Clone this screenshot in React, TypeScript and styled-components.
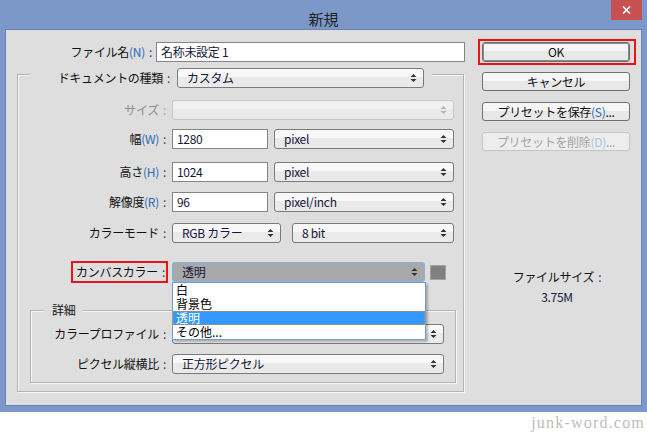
import styled, { createGlobalStyle } from "styled-components"

const GlobalStyle = createGlobalStyle`
  html, body { margin: 0; padding: 0; background: #fff; }
  body { font-family: "Noto Sans CJK JP", "Noto Sans", sans-serif; }
`

const Page = styled.div`
    width: 647px;
    height: 433px;
    background: #fff;
    overflow: hidden;
`
const Window = styled.div`
    height: 412px;
    box-sizing: border-box;
    background: #7c98c9;
    padding: 0 5px 6px;
    display: flex;
    flex-direction: column;
`
const TitleBar = styled.div`
    height: 29px;
    flex-shrink: 0;
    display: grid;
    grid-template-columns: 1fr auto 1fr;
    align-items: start;
`
const Title = styled.div`
    grid-column: 2;
    padding-top: 10px;
    font-size: 15px;
    line-height: 18px;
    color: #222;
`
const CloseButton = styled.div`
    grid-column: 3;
    justify-self: end;
    width: 31px;
    height: 20px;
    background: #c75050;
    display: flex;
    align-items: center;
    justify-content: center;
`
const Body = styled.div`
    flex: 1;
    background: #dedede;
    border: 1px solid #6a83b2;
    display: flex;
    font-size: 12px;
    letter-spacing: -0.3px;
    color: #111;
`
const FormColumn = styled.div`
    width: 472px;
    padding-top: 12px;
    display: flex;
    flex-direction: column;
`
const SideColumn = styled.div`
    width: 158px;
    padding-top: 9px;
    display: flex;
    flex-direction: column;
    align-items: flex-start;
`
const Row = styled.div<{ $mt?: number }>`
    display: flex;
    align-items: center;
    height: 20px;
    margin-top: ${p => p.$mt ?? 0}px;
`
const Label = styled.div<{ $w: number; $pr?: number; $muted?: boolean }>`
    width: ${p => p.$w}px;
    flex-shrink: 0;
    box-sizing: border-box;
    padding-right: ${p => p.$pr ?? 6}px;
    text-align: right;
    white-space: nowrap;
    line-height: 20px;
    color: ${p => (p.$muted ? "#8c8c8c" : "#111")};
`
const Framed = styled.span`
    display: inline-block;
    border: 2px solid #e8141a;
    padding: 0 1px 0 3px;
    line-height: 18px;
    margin: -1px 0;
`
const Accel = styled.span<{ $off?: boolean }>`
    color: ${p => (p.$off ? "#a9c4e4" : "#2b68b4")};
`
const Colon = styled.span<{ $muted?: boolean }>`
    color: ${p => (p.$muted ? "#a5a5a5" : "#3b3568")};
    margin-left: 4px;
`
const TextBox = styled.div<{ $w: number }>`
    width: ${p => p.$w}px;
    height: 20px;
    box-sizing: border-box;
    border: 1px solid #858585;
    background: #fff;
    padding-left: 4px;
    line-height: 18px;
    color: #16163a;
    flex-shrink: 0;
`
const SelectBox = styled.div<{ $w: number; $variant: "normal" | "disabled" | "open"; $ml?: number }>`
    position: relative;
    width: ${p => p.$w}px;
    height: 20px;
    margin-left: ${p => p.$ml ?? 0}px;
    box-sizing: border-box;
    flex-shrink: 0;
    display: flex;
    align-items: center;
    justify-content: space-between;
    padding: 0 6px 0 9px;
    border-radius: 3px;
    line-height: 18px;
    color: #16163a;
    border: 1px solid ${p => (p.$variant === "disabled" ? "#c6c6c6" : p.$variant === "open" ? "#7fb2e6" : "#7a7a7a")};
    background: ${p =>
        p.$variant === "open"
            ? "#a9a9a9"
            : p.$variant === "disabled"
            ? "linear-gradient(#f1f1f1 0 45%, #e9e9e9 45%)"
            : "linear-gradient(#f8f8f8 0 45%, #eaeaea 45%)"};
`
const Swatch = styled.div`
    width: 16px;
    height: 15px;
    margin-left: 5px;
    box-sizing: border-box;
    background: #808080;
    border: 1px solid #a0a0a0;
`
const Group = styled.div<{ $m: string; $w?: number }>`
    margin: ${p => p.$m};
    ${p => (p.$w ? `width: ${p.$w}px;` : "")}
    box-sizing: border-box;
    border: 1px solid #b3b3b3;
    box-shadow: inset 1px 1px 0 #f6f6f6, 1px 1px 0 #f6f6f6;
    padding-bottom: 8px;
    display: flex;
    flex-direction: column;
`
const GroupHeader = styled.div`
    display: flex;
    align-items: center;
    width: 402px;
    box-sizing: border-box;
    margin: -7px 0 0 12px;
    padding-right: 8px;
    background: #dedede;
`
const SubHeader = styled.div`
    align-self: flex-start;
    margin: -9px 0 0 13px;
    padding: 0 8px;
    line-height: 16px;
    background: #dedede;
`
const ListAnchor = styled.div`
    position: relative;
`
const DropList = styled.div`
    position: absolute;
    top: 20px;
    left: 0;
    width: 254px;
    box-sizing: border-box;
    border: 1px solid #6c9fd6;
    background: #fff;
    box-shadow: 2px 2px 2px rgba(0, 0, 0, 0.25);
    z-index: 2;
`
const DropItem = styled.div<{ $active?: boolean }>`
    height: 14px;
    line-height: 14px;
    padding-left: 3px;
    font-size: 12px;
    letter-spacing: 0;
    outline: ${p => (p.$active ? "1px dotted #d98a36" : "none")};
    outline-offset: -1px;
    background: ${p => (p.$active ? "#3399ff" : "#fff")};
    color: ${p => (p.$active ? "#fff" : "#000")};
`
const OkFrame = styled.div`
    border: 2px solid #ee1111;
    padding: 1px 4px 1px 2px;
`
const Button = styled.div<{ $mt?: number; $ml?: number; $kind?: "default" | "disabled" }>`
    width: 148px;
    height: ${p => (p.$kind === "default" ? 20 : 19)}px;
    margin-top: ${p => p.$mt ?? 0}px;
    margin-left: ${p => p.$ml ?? 0}px;
    box-sizing: border-box;
    border-radius: 3px;
    text-align: center;
    line-height: 17px;
    border: 1px solid ${p => (p.$kind === "disabled" ? "#c4c4c4" : "#707070")};
    box-shadow: ${p => (p.$kind === "default" ? "inset 0 0 0 1px #8a8a8a" : "none")};
    color: ${p => (p.$kind === "disabled" ? "#a3a3a3" : "#111")};
    background: ${p =>
        p.$kind === "disabled" ? "#ededed" : "linear-gradient(#f6f6f6 0 45%, #e8e8e8 45%)"};
`
const FileSize = styled.div`
    width: 158px;
    margin-top: 118px;
    text-align: center;
    line-height: 16px;
`
const FileSizeValue = styled.div`
    margin-top: 4px;
    color: #16163a;
`
const Footer = styled.div`
    height: 21px;
    display: flex;
    justify-content: flex-end;
    align-items: center;
    padding-right: 2px;
`
const Watermark = styled.div`
    font-family: "Liberation Serif", serif;
    font-size: 16px;
    letter-spacing: 1.2px;
    color: #bdbdbd;
`

const Arrows = ({ color }: { color: string }) => (
    <svg width="7" height="10" viewBox="0 0 7 10">
        <path d="M0.5 4 L3.5 1 L6.5 4 Z M0.5 6 L3.5 9 L6.5 6 Z" fill={color} />
    </svg>
)

type SelectProps = {
    w: number
    value?: string
    variant?: "normal" | "disabled" | "open"
    ml?: number
}

const Select = ({ w, value, variant = "normal", ml }: SelectProps) => (
    <SelectBox $w={w} $variant={variant} $ml={ml}>
        <span>{value}</span>
        <Arrows color={variant === "disabled" ? "#b5b5b5" : "#333"} />
    </SelectBox>
)

const canvasOptions = ["白", "背景色", "透明", "その他..."]

export default function App() {
    return (
        <>
            <GlobalStyle />
            <Page>
                <Window>
                    <TitleBar>
                        <Title>新規</Title>
                        <CloseButton>
                            <svg width="9" height="8" viewBox="0 0 9 8">
                                <path d="M1 0.5 L8 7.5 M8 0.5 L1 7.5" stroke="#fff" strokeWidth="1.6" />
                            </svg>
                        </CloseButton>
                    </TitleBar>
                    <Body>
                        <FormColumn>
                            <Row>
                                <Label $w={150} $pr={4}>
                                    ファイル名<Accel>(N)</Accel><Colon>:</Colon>
                                </Label>
                                <TextBox $w={309}>名称未設定 1</TextBox>
                            </Row>

                            <Group $m="12px 0 0 11px" $w={447}>
                                <GroupHeader>
                                    <Label $w={141} $pr={1}>
                                        ドキュメントの種類<Colon>:</Colon>
                                    </Label>
                                    <Select w={247} ml={6} value="カスタム" />
                                </GroupHeader>

                                <Row $mt={12}>
                                    <Label $w={154} $muted>
                                        サイズ<Colon $muted>:</Colon>
                                    </Label>
                                    <Select w={282} variant="disabled" />
                                </Row>
                                <Row $mt={9}>
                                    <Label $w={154}>
                                        幅<Accel>(W)</Accel><Colon>:</Colon>
                                    </Label>
                                    <TextBox $w={96}>1280</TextBox>
                                    <Select w={180} ml={6} value="pixel" />
                                </Row>
                                <Row $mt={13}>
                                    <Label $w={154}>
                                        高さ<Accel>(H)</Accel><Colon>:</Colon>
                                    </Label>
                                    <TextBox $w={96}>1024</TextBox>
                                    <Select w={180} ml={6} value="pixel" />
                                </Row>
                                <Row $mt={10}>
                                    <Label $w={154}>
                                        解像度<Accel>(R)</Accel><Colon>:</Colon>
                                    </Label>
                                    <TextBox $w={96}>96</TextBox>
                                    <Select w={180} ml={6} value="pixel/inch" />
                                </Row>
                                <Row $mt={11}>
                                    <Label $w={154}>
                                        カラーモード<Colon>:</Colon>
                                    </Label>
                                    <Select w={109} value="RGB カラー" />
                                    <Select w={162} ml={11} value="8 bit" />
                                </Row>
                                <Row $mt={19}>
                                    <Label $w={154} $pr={4}>
                                        <Framed>
                                            カンバスカラー<Colon>:</Colon>
                                        </Framed>
                                    </Label>
                                    <ListAnchor>
                                        <Select w={253} variant="open" value="透明" />
                                        <DropList>
                                            {canvasOptions.map(o => (
                                                <DropItem key={o} $active={o === "透明"}>
                                                    {o}
                                                </DropItem>
                                            ))}
                                        </DropList>
                                    </ListAnchor>
                                    <Swatch />
                                </Row>

                                <Group $m="28px 7px 0 12px">
                                    <SubHeader>詳細</SubHeader>
                                    <Row $mt={6}>
                                        <Label $w={141}>
                                            カラープロファイル<Colon>:</Colon>
                                        </Label>
                                        <Select w={272} />
                                    </Row>
                                    <Row $mt={10}>
                                        <Label $w={141}>
                                            ピクセル縦横比<Colon>:</Colon>
                                        </Label>
                                        <Select w={272} value="正方形ピクセル" />
                                    </Row>
                                </Group>
                            </Group>
                        </FormColumn>

                        <SideColumn>
                            <OkFrame>
                                <Button $kind="default">OK</Button>
                            </OkFrame>
                            <Button $mt={7} $ml={4}>キャンセル</Button>
                            <Button $mt={11} $ml={4}>
                                プリセットを保存<Accel>(S)</Accel>...
                            </Button>
                            <Button $mt={11} $ml={4} $kind="disabled">
                                プリセットを削除<Accel $off>(D)</Accel>...
                            </Button>
                            <FileSize>
                                ファイルサイズ<Colon>:</Colon>
                                <FileSizeValue>3.75M</FileSizeValue>
                            </FileSize>
                        </SideColumn>
                    </Body>
                </Window>
                <Footer>
                    <Watermark>junk-word.com</Watermark>
                </Footer>
            </Page>
        </>
    )
}
